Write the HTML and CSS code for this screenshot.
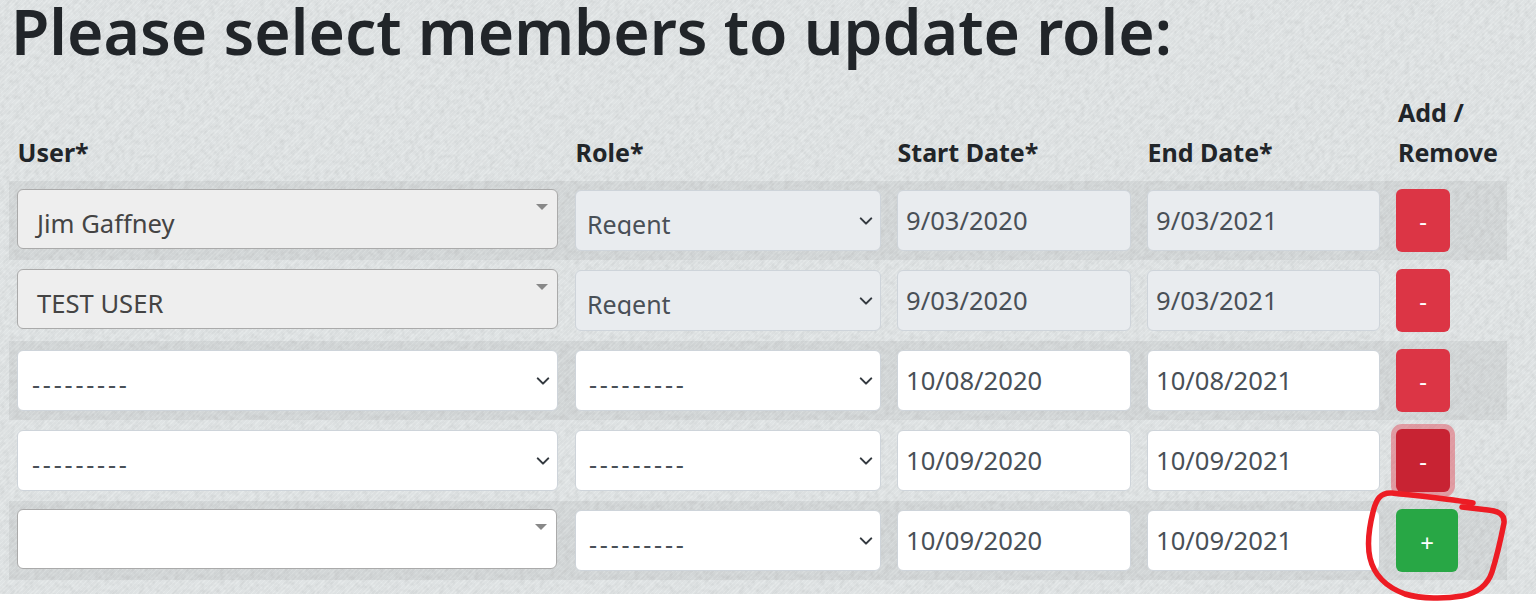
FILE: index.html

```html
<!DOCTYPE html>
<html lang="en">
<head>
  <meta charset="UTF-8" />
  <meta name="viewport" content="width=device-width, initial-scale=1" />
  <title>Update Member Roles</title>
  <link rel="stylesheet" href="styles.css">
</head>
<body>
  <main class="page">
    <h1>Please select members to update role:</h1>
    <table class="role-table">
      <colgroup>
        <col class="col-user"><col class="col-role"><col class="col-start"><col class="col-end"><col class="col-action">
      </colgroup>
      <thead>
        <tr>
          <th>User*</th>
          <th>Role*</th>
          <th>Start Date*</th>
          <th>End Date*</th>
          <th>Add / Remove</th>
        </tr>
      </thead>
      <tbody>
        <tr>
          <td><div class="combo combo-locked"><span>Jim Gaffney</span></div></td>
          <td><select class="field field-select" disabled><option>Regent</option></select></td>
          <td><input class="field" type="text" value="9/03/2020" disabled /></td>
          <td><input class="field" type="text" value="9/03/2021" disabled /></td>
          <td><button class="btn btn-remove" type="button">-</button></td>
        </tr>
        <tr>
          <td><div class="combo combo-locked"><span>TEST USER</span></div></td>
          <td><select class="field field-select" disabled><option>Regent</option></select></td>
          <td><input class="field" type="text" value="9/03/2020" disabled /></td>
          <td><input class="field" type="text" value="9/03/2021" disabled /></td>
          <td><button class="btn btn-remove" type="button">-</button></td>
        </tr>
        <tr>
          <td><select class="field field-select field-wide field-blank"><option>---------</option></select></td>
          <td><select class="field field-select field-blank"><option>---------</option></select></td>
          <td><input class="field" type="text" value="10/08/2020" /></td>
          <td><input class="field" type="text" value="10/08/2021" /></td>
          <td><button class="btn btn-remove" type="button">-</button></td>
        </tr>
        <tr>
          <td><select class="field field-select field-wide field-blank"><option>---------</option></select></td>
          <td><select class="field field-select field-blank"><option>---------</option></select></td>
          <td><input class="field" type="text" value="10/09/2020" /></td>
          <td><input class="field" type="text" value="10/09/2021" /></td>
          <td><button class="btn btn-remove btn-active" type="button">-</button></td>
        </tr>
        <tr>
          <td><div class="combo combo-empty"></div></td>
          <td><select class="field field-select field-blank"><option>---------</option></select></td>
          <td><input class="field" type="text" value="10/09/2020" /></td>
          <td><input class="field" type="text" value="10/09/2021" /></td>
          <td><button class="btn btn-add" type="button">+</button></td>
        </tr>
      </tbody>
    </table>
  </main>

  <!-- red marker circle drawn over the add button -->
  <svg class="ink" width="1536" height="603" viewBox="0 0 1536 603" aria-hidden="true">
    <path d="M1473 503 C1450 499 1420 496 1392 493 C1380 492 1376 500 1373 512 C1369 528 1367 545 1370 558 C1374 575 1386 587 1405 594 C1422 599 1445 599 1462 596 C1478 593 1488 584 1492 572 C1497 556 1501 538 1504 523 C1505 514 1498 511 1488 510 C1480 509 1470 508 1462 507" />
  </svg>
</body>
</html>
```

FILE: styles.css

```css
* {
  box-sizing: border-box;
}

html,
body {
  margin: 0;
  height: 603px;
  overflow: hidden;
  background: white;
}

body {
  font-family: "Noto Sans", "Open Sans", sans-serif;
  color: #212529;
}

/* woven paper look: soft noise over a fine diagonal hatch */
.page {
  height: 594px;
  padding: 0 9px;
  background-color: #dfe3e4;
  background-image:
    url("data:image/svg+xml,%3csvg xmlns='http://www.w3.org/2000/svg' width='300' height='300'%3e%3cfilter id='n' x='0' y='0' width='100%25' height='100%25'%3e%3cfeTurbulence type='fractalNoise' baseFrequency='0.2' numOctaves='2' stitchTiles='stitch'/%3e%3cfeColorMatrix values='0 0 0 0 0 0 0 0 0 0 0 0 0 0 0 0 0 0 0.12 -0.045'/%3e%3c/filter%3e%3crect width='300' height='300' filter='url(%23n)'/%3e%3c/svg%3e"),
    repeating-linear-gradient(135deg, rgba(255,255,255,0.2) 0 1px, transparent 1px 3px);
}

h1 {
  margin: 0;
  padding-left: 2px;
  height: 82px;
  font-size: 62.4px;
  font-weight: 600;
  line-height: 62px;
  white-space: nowrap;
}

.role-table {
  width: 1498px;
  table-layout: fixed;
  border-collapse: collapse;
}

.col-user { width: 558px; }
.col-role { width: 322px; }
.col-start { width: 250px; }
.col-end { width: 249px; }
.col-action { width: 119px; }

th {
  height: 99px;
  padding: 0 4px 9px 8.5px;
  font-size: 25px;
  font-weight: 700;
  line-height: 40px;
  text-align: left;
  vertical-align: bottom;
}

th:last-child {
  padding-left: 10px;
}

td {
  padding: 0 8px;
  vertical-align: middle;
}

td:first-child {
  padding-right: 9px;
}

tbody tr:nth-child(odd) {
  height: 79px;
  background: rgba(0,0,0,0.05);
}

tbody tr:nth-child(even) {
  height: 81px;
}

.field {
  display: block;
  width: 100%;
  height: 61px;
  padding: 0 8px;
  border: 1px solid #ced4da;
  border-radius: 6px;
  background-color: white;
  font-family: inherit;
  font-size: 25.6px;
  color: #495057;
}

.field:disabled {
  background-color: #e9ecef;
  opacity: 1;
  color: #495057;
}

.field-select {
  appearance: none;
  padding: 16px 30px 14px 13px;
  font-size: 25px;
  background-image: url("data:image/svg+xml,%3csvg xmlns='http://www.w3.org/2000/svg' viewBox='0 0 16 16'%3e%3cpath fill='none' stroke='%23343a40' stroke-linecap='round' stroke-linejoin='round' stroke-width='2.4' d='m2 5 6 6 6-6'/%3e%3c/svg%3e");
  background-repeat: no-repeat;
  background-position: right 7px center;
  background-size: 14px 14px;
}

.field-select:disabled {
  padding-left: 11px;
}

.field-wide {
  padding-left: 14px;
}

/* the empty option's hyphens run wider than in this font */
.field-blank {
  letter-spacing: 2.8px;
}

.combo {
  position: relative;
  display: flex;
  align-items: center;
  height: 60px;
  margin-bottom: 3px;
  padding: 8px 20px 0 19px;
  border: 1px solid #aaa;
  border-radius: 6px;
  font-size: 25.6px;
  color: #444;
}

/* select2 style arrow */
.combo::after {
  content: "";
  position: absolute;
  top: 14px;
  right: 9px;
  border-style: solid;
  border-width: 6px 6px 0;
  border-color: #888 transparent transparent;
}

.combo-locked {
  background: #eee;
}

.combo-empty {
  margin-right: 1px;
  background: white;
}

.btn {
  display: block;
  height: 63px;
  padding: 0;
  border: none;
  border-radius: 6px;
  font-family: inherit;
  font-size: 24px;
  color: white;
  cursor: pointer;
}

.btn-remove {
  width: 54px;
  background: #dc3545;
}

.btn-active {
  background: #c82333;
  box-shadow: 0 0 0 5px rgba(225,83,97,0.5);
}

.btn-add {
  width: 62px;
  padding-top: 4px;
  background: #28a745;
}

.ink {
  position: absolute;
  top: 0;
  left: 0;
  pointer-events: none;
}

.ink path {
  fill: none;
  stroke: #ed1c24;
  stroke-width: 5.5;
  stroke-linecap: round;
  stroke-linejoin: round;
}
```
